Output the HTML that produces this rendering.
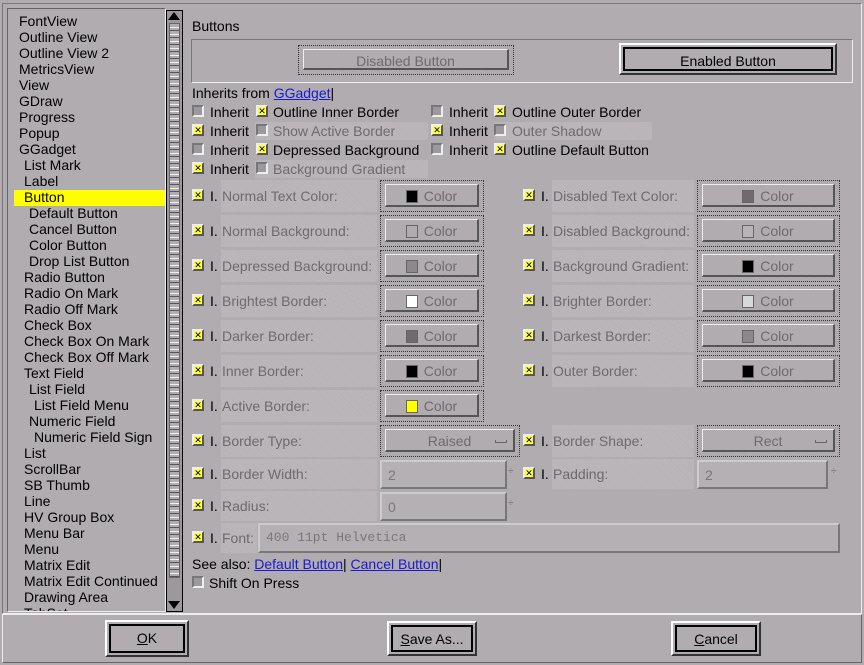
<!DOCTYPE html>
<html><head><meta charset="utf-8"><style>
*{margin:0;padding:0;box-sizing:border-box}
body{width:864px;height:665px;background:#b0acb0;font-family:"Liberation Sans",sans-serif;font-size:14px;color:#000;position:relative;overflow:hidden}
.a{position:absolute;white-space:nowrap}
.li{position:absolute;white-space:nowrap;line-height:16px;height:16px}
.cb{position:absolute;width:12px;height:12px;background:#ffff40;border-left:2px solid #eee;border-top:2px solid #eee;border-right:2px solid #555;border-bottom:2px solid #555;font-size:9px;line-height:8px;text-align:center;color:#000}
.cu{position:absolute;width:12px;height:12px;background:#9c989c;border-left:2px solid #777;border-top:2px solid #777;border-right:2px solid #eee;border-bottom:2px solid #eee}
.dis{color:#6e6a6e}
.sh{position:absolute;background:repeating-linear-gradient(45deg,#bdb9bd 0 1px,#b5b1b5 1px 2px)}
.btn{position:absolute;border:1px dotted #333;background:repeating-linear-gradient(45deg,#b4b0b4 0 1px,#a8a4a8 1px 2px)}
.btn>div{position:absolute;left:4px;top:3px;right:4px;bottom:4px;background:#b0acb0;border:1px solid #eee;border-right:2px solid #555;border-bottom:2px solid #555;text-align:center;color:#6e6a6e;line-height:22px}
.sw{display:inline-block;width:12px;height:13px;vertical-align:-2px;margin-right:6px;border:1px solid #666}
.tf{position:absolute;background:#b4b0b4;border:2px solid #ccc;border-right-color:#777;border-bottom-color:#777;color:#7a767a;padding-left:6px;line-height:26px}
a{color:#1a1ad0}
.bb{position:absolute;border:2px solid #fff;border-right-color:#333;border-bottom-color:#333;background:#b0acb0}
.bb>div{position:absolute;left:2px;top:2px;right:2px;bottom:2px;border:2px solid #000;text-align:center;line-height:24px}
.dl{position:absolute;right:6px;top:10px;width:12px;height:3px;border:1px solid #666;border-top:none}
</style></head><body>
<div class="a" style="left:2px;top:3px;width:860px;height:611px;border:1px solid #777;border-right-color:#eee;border-bottom-color:#eee"></div>
<div class="a" style="left:2px;top:614px;width:860px;height:49px;border:1px solid #eee;border-right-color:#666;border-bottom-color:#666"></div>
<div class="a" style="left:7px;top:8px;width:159px;height:604px;border:1px solid #666;border-right-color:#eee;border-bottom-color:#eee;overflow:hidden">
<div class="a" style="left:6px;top:181px;width:153px;height:16px;background:#ffff00"></div>
<div class="li" style="left:11px;top:4px">FontView</div>
<div class="li" style="left:11px;top:20px">Outline View</div>
<div class="li" style="left:11px;top:36px">Outline View 2</div>
<div class="li" style="left:11px;top:52px">MetricsView</div>
<div class="li" style="left:11px;top:68px">View</div>
<div class="li" style="left:11px;top:84px">GDraw</div>
<div class="li" style="left:11px;top:100px">Progress</div>
<div class="li" style="left:11px;top:116px">Popup</div>
<div class="li" style="left:11px;top:132px">GGadget</div>
<div class="li" style="left:16px;top:148px">List Mark</div>
<div class="li" style="left:16px;top:164px">Label</div>
<div class="li" style="left:16px;top:180px">Button</div>
<div class="li" style="left:21px;top:196px">Default Button</div>
<div class="li" style="left:21px;top:212px">Cancel Button</div>
<div class="li" style="left:21px;top:228px">Color Button</div>
<div class="li" style="left:21px;top:244px">Drop List Button</div>
<div class="li" style="left:16px;top:260px">Radio Button</div>
<div class="li" style="left:16px;top:276px">Radio On Mark</div>
<div class="li" style="left:16px;top:292px">Radio Off Mark</div>
<div class="li" style="left:16px;top:308px">Check Box</div>
<div class="li" style="left:16px;top:324px">Check Box On Mark</div>
<div class="li" style="left:16px;top:340px">Check Box Off Mark</div>
<div class="li" style="left:16px;top:356px">Text Field</div>
<div class="li" style="left:21px;top:372px">List Field</div>
<div class="li" style="left:26px;top:388px">List Field Menu</div>
<div class="li" style="left:21px;top:404px">Numeric Field</div>
<div class="li" style="left:26px;top:420px">Numeric Field Sign</div>
<div class="li" style="left:16px;top:436px">List</div>
<div class="li" style="left:16px;top:452px">ScrollBar</div>
<div class="li" style="left:16px;top:468px">SB Thumb</div>
<div class="li" style="left:16px;top:484px">Line</div>
<div class="li" style="left:16px;top:500px">HV Group Box</div>
<div class="li" style="left:16px;top:516px">Menu Bar</div>
<div class="li" style="left:16px;top:532px">Menu</div>
<div class="li" style="left:16px;top:548px">Matrix Edit</div>
<div class="li" style="left:16px;top:564px">Matrix Edit Continued</div>
<div class="li" style="left:16px;top:580px">Drawing Area</div>
<div class="li" style="left:16px;top:596px">TabSet</div>
</div>
<div class="a" style="left:166px;top:10px;width:17px;height:602px;border:1px solid #000;background:#9c989c"></div>
<div class="a" style="left:169px;top:23px;width:11px;height:555px;background:repeating-linear-gradient(#b0acb0 0 3px,#f0f0f0 3px 4px,#b0acb0 4px 6px,#555 6px 7px);border:1px solid #666"></div>
<div class="a" style="left:168px;top:12px;width:0;height:0;border-left:6px solid transparent;border-right:6px solid transparent;border-bottom:8px solid #000"></div>
<div class="a" style="left:168px;top:601px;width:0;height:0;border-left:6px solid transparent;border-right:6px solid transparent;border-top:8px solid #000"></div>
<div class="a" style="left:192px;top:18px">Buttons</div>
<div class="a" style="left:191px;top:39px;width:662px;height:44px;border:1px solid #eee;border-left-color:#777;border-top-color:#777"></div>
<div class="btn" style="left:298px;top:45px;width:216px;height:30px"><div>Disabled Button</div></div>
<div class="bb" style="left:619px;top:43px;width:218px;height:32px"><div>Enabled Button</div></div>
<div class="a" style="left:192px;top:85px">Inherits from <a style="text-decoration:underline">GGadget</a>|</div>
<div class="cu" style="left:192px;top:105px"></div><div class="a" style="left:210px;top:104px">Inherit</div>
<div class="cb" style="left:256px;top:105px">✕</div><div class="a" style="left:273px;top:104px">Outline Inner Border</div>
<div class="cu" style="left:431px;top:105px"></div><div class="a" style="left:449px;top:104px">Inherit</div>
<div class="cb" style="left:494px;top:105px">✕</div><div class="a" style="left:512px;top:104px">Outline Outer Border</div>
<div class="cb" style="left:192px;top:124px">✕</div><div class="a" style="left:210px;top:123px">Inherit</div>
<div class="sh" style="left:255px;top:122px;width:173px;height:18px"></div>
<div class="cu" style="left:256px;top:124px"></div><div class="a dis" style="left:273px;top:123px">Show Active Border</div>
<div class="cb" style="left:431px;top:124px">✕</div><div class="a" style="left:449px;top:123px">Inherit</div>
<div class="sh" style="left:494px;top:122px;width:158px;height:18px"></div>
<div class="cu" style="left:494px;top:124px"></div><div class="a dis" style="left:512px;top:123px">Outer Shadow</div>
<div class="cu" style="left:192px;top:143px"></div><div class="a" style="left:210px;top:142px">Inherit</div>
<div class="cb" style="left:256px;top:143px">✕</div><div class="a" style="left:273px;top:142px">Depressed Background</div>
<div class="cu" style="left:431px;top:143px"></div><div class="a" style="left:449px;top:142px">Inherit</div>
<div class="cb" style="left:494px;top:143px">✕</div><div class="a" style="left:512px;top:142px">Outline Default Button</div>
<div class="cb" style="left:192px;top:162px">✕</div><div class="a" style="left:210px;top:161px">Inherit</div>
<div class="sh" style="left:255px;top:160px;width:173px;height:18px"></div>
<div class="cu" style="left:256px;top:162px"></div><div class="a dis" style="left:273px;top:161px">Background Gradient</div>
<div class="sh" style="left:221px;top:180px;width:156px;height:32px"></div><div class="cb" style="left:192px;top:189px">✕</div><div class="a" style="left:210px;top:188px">I.</div><div class="a dis" style="left:222px;top:188px">Normal Text Color:</div>
<div class="btn" style="left:380px;top:180px;width:104px;height:32px"><div><span class="sw" style="background:#000"></span>Color</div></div>
<div class="sh" style="left:221px;top:215px;width:156px;height:32px"></div><div class="cb" style="left:192px;top:224px">✕</div><div class="a" style="left:210px;top:223px">I.</div><div class="a dis" style="left:222px;top:223px">Normal Background:</div>
<div class="btn" style="left:380px;top:215px;width:104px;height:32px"><div><span class="sw" style="background:#b0acb0"></span>Color</div></div>
<div class="sh" style="left:221px;top:250px;width:156px;height:32px"></div><div class="cb" style="left:192px;top:259px">✕</div><div class="a" style="left:210px;top:258px">I.</div><div class="a dis" style="left:222px;top:258px">Depressed Background:</div>
<div class="btn" style="left:380px;top:250px;width:104px;height:32px"><div><span class="sw" style="background:#8c888c"></span>Color</div></div>
<div class="sh" style="left:221px;top:285px;width:156px;height:32px"></div><div class="cb" style="left:192px;top:294px">✕</div><div class="a" style="left:210px;top:293px">I.</div><div class="a dis" style="left:222px;top:293px">Brightest Border:</div>
<div class="btn" style="left:380px;top:285px;width:104px;height:32px"><div><span class="sw" style="background:#fff"></span>Color</div></div>
<div class="sh" style="left:221px;top:320px;width:156px;height:32px"></div><div class="cb" style="left:192px;top:329px">✕</div><div class="a" style="left:210px;top:328px">I.</div><div class="a dis" style="left:222px;top:328px">Darker Border:</div>
<div class="btn" style="left:380px;top:320px;width:104px;height:32px"><div><span class="sw" style="background:#6e6a6e"></span>Color</div></div>
<div class="sh" style="left:221px;top:355px;width:156px;height:32px"></div><div class="cb" style="left:192px;top:364px">✕</div><div class="a" style="left:210px;top:363px">I.</div><div class="a dis" style="left:222px;top:363px">Inner Border:</div>
<div class="btn" style="left:380px;top:355px;width:104px;height:32px"><div><span class="sw" style="background:#000"></span>Color</div></div>
<div class="sh" style="left:221px;top:390px;width:156px;height:32px"></div><div class="cb" style="left:192px;top:399px">✕</div><div class="a" style="left:210px;top:398px">I.</div><div class="a dis" style="left:222px;top:398px">Active Border:</div>
<div class="btn" style="left:380px;top:390px;width:104px;height:32px"><div><span class="sw" style="background:#ffff00"></span>Color</div></div>
<div class="sh" style="left:552px;top:180px;width:142px;height:32px"></div><div class="cb" style="left:523px;top:189px">✕</div><div class="a" style="left:541px;top:188px">I.</div><div class="a dis" style="left:553px;top:188px">Disabled Text Color:</div>
<div class="btn" style="left:697px;top:180px;width:143px;height:32px"><div><span class="sw" style="background:#6e6a6e"></span>Color</div></div>
<div class="sh" style="left:552px;top:215px;width:142px;height:32px"></div><div class="cb" style="left:523px;top:224px">✕</div><div class="a" style="left:541px;top:223px">I.</div><div class="a dis" style="left:553px;top:223px">Disabled Background:</div>
<div class="btn" style="left:697px;top:215px;width:143px;height:32px"><div><span class="sw" style="background:#b8b4b8"></span>Color</div></div>
<div class="sh" style="left:552px;top:250px;width:142px;height:32px"></div><div class="cb" style="left:523px;top:259px">✕</div><div class="a" style="left:541px;top:258px">I.</div><div class="a dis" style="left:553px;top:258px">Background Gradient:</div>
<div class="btn" style="left:697px;top:250px;width:143px;height:32px"><div><span class="sw" style="background:#000"></span>Color</div></div>
<div class="sh" style="left:552px;top:285px;width:142px;height:32px"></div><div class="cb" style="left:523px;top:294px">✕</div><div class="a" style="left:541px;top:293px">I.</div><div class="a dis" style="left:553px;top:293px">Brighter Border:</div>
<div class="btn" style="left:697px;top:285px;width:143px;height:32px"><div><span class="sw" style="background:#d8d8d8"></span>Color</div></div>
<div class="sh" style="left:552px;top:320px;width:142px;height:32px"></div><div class="cb" style="left:523px;top:329px">✕</div><div class="a" style="left:541px;top:328px">I.</div><div class="a dis" style="left:553px;top:328px">Darkest Border:</div>
<div class="btn" style="left:697px;top:320px;width:143px;height:32px"><div><span class="sw" style="background:#8c888c"></span>Color</div></div>
<div class="sh" style="left:552px;top:355px;width:142px;height:32px"></div><div class="cb" style="left:523px;top:364px">✕</div><div class="a" style="left:541px;top:363px">I.</div><div class="a dis" style="left:553px;top:363px">Outer Border:</div>
<div class="btn" style="left:697px;top:355px;width:143px;height:32px"><div><span class="sw" style="background:#000"></span>Color</div></div>
<div class="sh" style="left:221px;top:425px;width:156px;height:32px"></div><div class="cb" style="left:192px;top:434px">✕</div><div class="a" style="left:210px;top:433px">I.</div><div class="a dis" style="left:222px;top:433px">Border Type:</div>
<div class="btn" style="left:380px;top:425px;width:140px;height:32px"><div>Raised<span class="dl"></span></div></div>
<div class="sh" style="left:552px;top:425px;width:142px;height:32px"></div><div class="cb" style="left:523px;top:434px">✕</div><div class="a" style="left:541px;top:433px">I.</div><div class="a dis" style="left:553px;top:433px">Border Shape:</div>
<div class="btn" style="left:697px;top:425px;width:143px;height:32px"><div>Rect<span class="dl"></span></div></div>
<div class="sh" style="left:221px;top:459px;width:156px;height:30px"></div><div class="cb" style="left:192px;top:467px">✕</div><div class="a" style="left:210px;top:466px">I.</div><div class="a dis" style="left:222px;top:466px">Border Width:</div>
<div class="tf" style="left:380px;top:460px;width:127px;height:29px">2</div><div class="a dis" style="left:508px;top:466px;font-size:10px">÷</div>
<div class="sh" style="left:552px;top:459px;width:142px;height:30px"></div><div class="cb" style="left:523px;top:467px">✕</div><div class="a" style="left:541px;top:466px">I.</div><div class="a dis" style="left:553px;top:466px">Padding:</div>
<div class="tf" style="left:697px;top:460px;width:131px;height:29px">2</div><div class="a dis" style="left:831px;top:466px;font-size:10px">÷</div>
<div class="sh" style="left:221px;top:491px;width:156px;height:30px"></div><div class="cb" style="left:192px;top:499px">✕</div><div class="a" style="left:210px;top:498px">I.</div><div class="a dis" style="left:222px;top:498px">Radius:</div>
<div class="tf" style="left:380px;top:492px;width:127px;height:29px">0</div><div class="a dis" style="left:508px;top:498px;font-size:10px">÷</div>
<div class="sh" style="left:221px;top:523px;width:36px;height:30px"></div><div class="cb" style="left:192px;top:531px">✕</div><div class="a" style="left:210px;top:530px">I.</div><div class="a dis" style="left:222px;top:530px">Font:</div>
<div class="tf" style="left:258px;top:523px;width:582px;height:30px;font-family:'Liberation Mono',monospace;font-size:13px">400 11pt Helvetica</div>
<div class="a" style="left:192px;top:556px">See also: <a style="text-decoration:underline">Default Button</a>| <a style="text-decoration:underline">Cancel Button</a>|</div>
<div class="cu" style="left:192px;top:576px"></div><div class="a" style="left:209px;top:575px">Shift On Press</div>
<div class="bb" style="left:105px;top:620px;width:84px;height:37px"><div><u>O</u>K</div></div>
<div class="bb" style="left:387px;top:621px;width:90px;height:35px"><div><u>S</u>ave As...</div></div>
<div class="bb" style="left:671px;top:621px;width:90px;height:35px"><div><u>C</u>ancel</div></div>
</body></html>
